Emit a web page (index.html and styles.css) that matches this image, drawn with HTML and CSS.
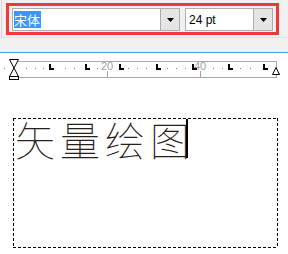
FILE: index.html
```html
<!DOCTYPE html>
<html lang="zh">
<head>
    <meta charset="UTF-8">
    <title>矢量绘图</title>
    <link rel="stylesheet" href="styles.css">
</head>
<body>
    <div class="toolbar">
        <div class="sep"></div>
        <div class="sel-frame">
            <div class="combo combo-font">
                <span class="value"><span class="selected">宋体</span></span>
                <span class="drop"><svg width="7" height="4" viewBox="0 0 7 4"><path d="M0 0h7L3.5 4z" fill="#000"/></svg></span>
            </div>
            <div class="combo combo-size">
                <span class="value">24 pt</span>
                <span class="drop"><svg width="7" height="4" viewBox="0 0 7 4"><path d="M0 0h7L3.5 4z" fill="#000"/></svg></span>
            </div>
        </div>
    </div>
    <div class="band"></div>

    <div class="ruler">
        <svg width="288" height="32" viewBox="0 0 288 32">
            <rect x="13.5" y="8.5" width="263" height="16" fill="#fff" stroke="#a8a8a8"/>
            <g fill="#808080">
                <rect x="4" y="15" width="1" height="1"/>
                <rect x="26" y="15" width="1" height="1"/>
                <rect x="35" y="15" width="1" height="1"/>
                <rect x="43" y="15" width="1" height="1"/>
                <rect x="65" y="15" width="1" height="1"/>
                <rect x="74" y="15" width="1" height="1"/>
                <rect x="97" y="15" width="1" height="1"/>
                <rect x="128" y="15" width="1" height="1"/>
                <rect x="137" y="15" width="1" height="1"/>
                <rect x="146" y="15" width="1" height="1"/>
                <rect x="167" y="15" width="1" height="1"/>
                <rect x="176" y="15" width="1" height="1"/>
                <rect x="185" y="15" width="1" height="1"/>
                <rect x="213" y="15" width="1" height="1"/>
                <rect x="222" y="15" width="1" height="1"/>
                <rect x="240" y="15" width="1" height="1"/>
                <rect x="250" y="15" width="1" height="1"/>
            </g>
            <g fill="#a0a0a0" font-family="Liberation Sans, Arial, sans-serif" font-size="11" text-anchor="middle">
                <text x="107" y="17">20</text>
                <text x="200" y="17">40</text>
            </g>
            <g stroke="#a0a0a0">
                <line x1="107.5" y1="18" x2="107.5" y2="24"/>
                <line x1="200.5" y1="18" x2="200.5" y2="24"/>
            </g>
            <g fill="#000">
                <path d="M49 11h2v4h3v2h-5z"/>
                <path d="M85 11h2v4h3v2h-5z"/>
                <path d="M119 11h2v4h3v2h-5z"/>
                <path d="M156 11h2v4h3v2h-5z"/>
                <path d="M192 11h2v4h3v2h-5z"/>
                <path d="M228 11h2v4h3v2h-5z"/>
                <path d="M263 11h2v4h3v2h-5z"/>
            </g>
            <g fill="#fff" stroke="#000">
                <path d="M9.5 6.5h9l-4.5 8.5z"/>
                <path d="M14 15l-4.5 8.5h9z"/>
                <rect x="9.5" y="23.5" width="9" height="3"/>
                <path d="M276 14.5l-3.5 7h7z"/>
            </g>
        </svg>
    </div>

    <div class="textbox">
        <span class="glyphs">矢量绘图</span><span class="caret"></span>
    </div>
</body>
</html>
```

FILE: styles.css
```css
body {
    margin: 0;
    background: #fff;
    font-family: "Noto Sans CJK SC", sans-serif;
}
.toolbar {
    display: flex;
    align-items: flex-start;
    height: 37px;
    background: #f0f0f0;
    border-bottom: 1px solid #e2e2e2;
}
.sep {
    width: 1px;
    height: 37px;
    margin-left: 1px;
    background: #d9d9d9;
}
.sel-frame {
    display: flex;
    gap: 5px;
    box-sizing: border-box;
    width: 273px;
    height: 32px;
    margin: 3px 0 0 4px;
    padding: 2px 3px;
    border: 3px solid #f03838;
}
.combo {
    display: flex;
    box-sizing: border-box;
    height: 23px;
    border: 1px solid #adadad;
    background: #fff;
}
.combo-font {
    width: 168px;
}
.combo-size {
    width: 88px;
}
.value {
    flex: 1;
    display: flex;
    align-items: center;
    padding-left: 1px;
    font-size: 13px;
}
.selected {
    background: #3399ff;
    color: #fff;
    line-height: 17px;
    padding-right: 1px;
}
.combo-size .value {
    padding-left: 3px;
    font-family: "Liberation Sans", Arial, sans-serif;
    font-size: 12px;
    color: #000;
}
.drop {
    width: 18px;
    display: flex;
    align-items: center;
    justify-content: center;
    background: #e5e5e5;
    border-left: 1px solid #adadad;
}
.band {
    height: 14px;
    background: #f0f0f0;
    border-bottom: 1px solid #3c9ee8;
}
.ruler {
    height: 32px;
}
.ruler svg {
    display: block;
}
/* dashed frame drawn with gradients: 3px dash, 2px gap */
.textbox {
    display: flex;
    align-items: flex-start;
    box-sizing: border-box;
    width: 265px;
    height: 130px;
    margin: 33px 0 0 13px;
    padding: 1px 0 0 2px;
    background:
        repeating-linear-gradient(90deg, #000 0 3px, transparent 3px 5px) top / 100% 1px no-repeat,
        repeating-linear-gradient(90deg, #000 0 3px, transparent 3px 5px) bottom / 100% 1px no-repeat,
        repeating-linear-gradient(180deg, #000 0 3px, transparent 3px 5px) left / 1px 100% no-repeat,
        repeating-linear-gradient(180deg, #000 0 3px, transparent 3px 5px) right / 1px 100% no-repeat;
}
.glyphs {
    font-size: 40px;
    font-weight: 100;
    line-height: 40px;
    letter-spacing: 5px;
    color: #25201c;
    margin-top: 0;
}
.caret {
    width: 2px;
    height: 39px;
    margin-left: -9px;
    background: #000;
}
```
